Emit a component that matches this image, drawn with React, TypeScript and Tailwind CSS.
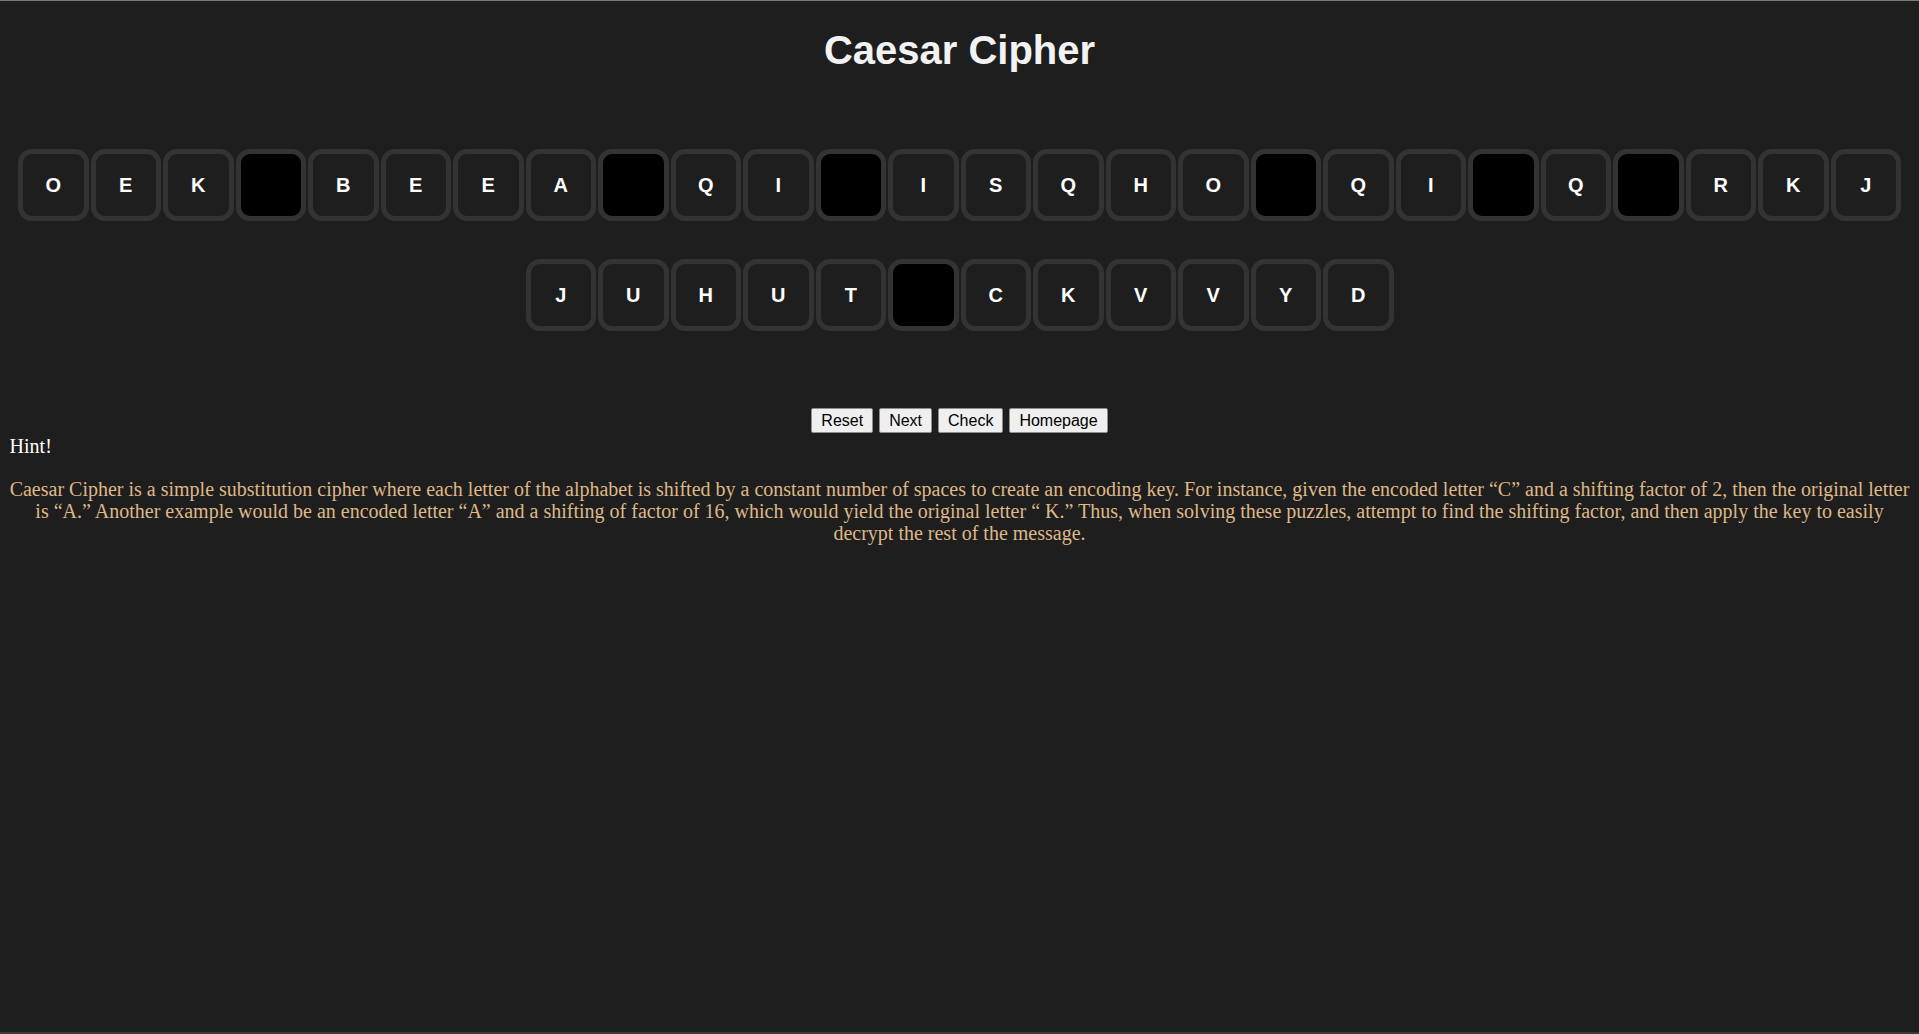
import React from "react";

const rowOne = "OEK BEEA QI ISQHO QI Q RKJ".split("");
const rowTwo = "JUHUT CKVVYD".split("");

function Tile({ ch }: { ch: string }) {
  const blank = ch === " ";
  return (
    <div
      className={`w-[70.5px] h-[72px] rounded-[14px] border-[5px] border-[#333333] flex items-center justify-center text-[20px] font-bold text-white ${
        blank ? "bg-black" : "bg-[#1e1e1e]"
      }`}
    >
      {blank ? "" : ch}
    </div>
  );
}

export default function App() {
  return (
    <div
      className="h-[1034px] bg-[#1e1e1e] border-t border-[#6f806d] border-b-2 border-b-[#3a3a3a] overflow-hidden"
      style={{ fontFamily: '"Liberation Serif", serif' }}
    >
      <h1
        className="mt-[26px] text-center text-[40px] leading-[46px] font-bold text-[#f2f2f2]"
        style={{ fontFamily: '"Liberation Sans", Arial, sans-serif' }}
      >
        Caesar Cipher
      </h1>

      <div style={{ fontFamily: '"Liberation Sans", Arial, sans-serif' }}>
        <div className="mt-[76px] flex justify-center gap-[2px]">
          {rowOne.map((c, i) => (
            <Tile key={i} ch={c} />
          ))}
        </div>
        <div className="mt-[38px] flex justify-center gap-[2px]">
          {rowTwo.map((c, i) => (
            <Tile key={i} ch={c} />
          ))}
        </div>
      </div>

      <div
        className="mt-[77px] flex justify-center gap-[6px]"
        style={{ fontFamily: '"Liberation Sans", Arial, sans-serif' }}
      >
        {["Reset", "Next", "Check", "Homepage"].map(b => (
          <button
            key={b}
            className="h-[25px] px-[9px] bg-[#efefef] border border-[#8f8f8f] rounded-[2px] text-[16px] leading-[18px] text-black"
          >
            {b}
          </button>
        ))}
      </div>

      <div className="mt-[2px] px-[9.6px] text-[20px] leading-[22px] text-white">Hint!</div>
      <p className="mt-[21px] px-[8px] text-center text-[20px] leading-[22px] text-[#deb887]">
        Caesar Cipher is a simple substitution cipher where each letter of the alphabet is shifted by a constant number
        of spaces to create an encoding key. For instance, given the encoded letter “C” and a shifting factor of 2, then
        the original letter is “A.” Another example would be an encoded letter “A” and a shifting of factor of 16, which
        would yield the original letter “ K.” Thus, when solving these puzzles, attempt to find the shifting factor, and
        then apply the key to easily decrypt the rest of the message.
      </p>
    </div>
  );
}
